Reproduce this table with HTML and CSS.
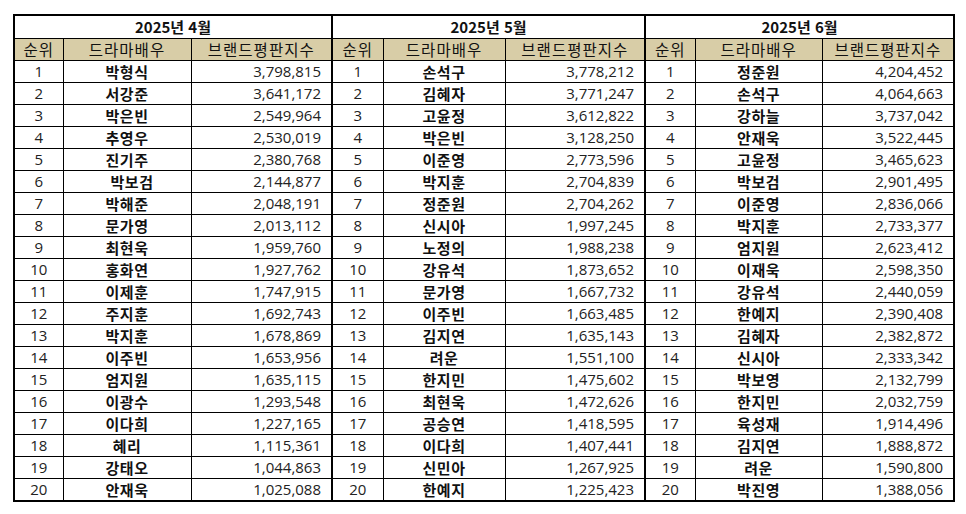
FILE: index.html
```html
<!DOCTYPE html>
<html lang="ko">
<head>
<meta charset="utf-8">
<title>드라마배우 브랜드평판지수</title>
<link rel="stylesheet" href="styles.css">
</head>
<body>
<table class="rank">
<colgroup>
<col class="c-rank"><col class="c-name"><col class="c-num">
<col class="c-rank2"><col class="c-name2"><col class="c-num2">
<col class="c-rank3"><col class="c-name3"><col class="c-num3">
</colgroup>
<tr class="title"><td colspan="3">2025년 4월</td><td colspan="3" class="g">2025년 5월</td><td colspan="3" class="g">2025년 6월</td></tr>
<tr class="hd"><td>순위</td><td>드라마배우</td><td>브랜드평판지수</td><td class="g">순위</td><td>드라마배우</td><td>브랜드평판지수</td><td class="g">순위</td><td>드라마배우</td><td>브랜드평판지수</td></tr>
<tr><td class="no">1</td><td class="name">박형식</td><td class="num">3,798,815</td><td class="g no">1</td><td class="name">손석구</td><td class="num">3,778,212</td><td class="g no">1</td><td class="name">정준원</td><td class="num">4,204,452</td></tr>
<tr><td class="no">2</td><td class="name">서강준</td><td class="num">3,641,172</td><td class="g no">2</td><td class="name">김혜자</td><td class="num">3,771,247</td><td class="g no">2</td><td class="name">손석구</td><td class="num">4,064,663</td></tr>
<tr><td class="no">3</td><td class="name">박은빈</td><td class="num">2,549,964</td><td class="g no">3</td><td class="name">고윤정</td><td class="num">3,612,822</td><td class="g no">3</td><td class="name">강하늘</td><td class="num">3,737,042</td></tr>
<tr><td class="no">4</td><td class="name">추영우</td><td class="num">2,530,019</td><td class="g no">4</td><td class="name">박은빈</td><td class="num">3,128,250</td><td class="g no">4</td><td class="name">안재욱</td><td class="num">3,522,445</td></tr>
<tr><td class="no">5</td><td class="name">진기주</td><td class="num">2,380,768</td><td class="g no">5</td><td class="name">이준영</td><td class="num">2,773,596</td><td class="g no">5</td><td class="name">고윤정</td><td class="num">3,465,623</td></tr>
<tr><td class="no">6</td><td class="name shift">박보검</td><td class="num">2,144,877</td><td class="g no">6</td><td class="name">박지훈</td><td class="num">2,704,839</td><td class="g no">6</td><td class="name">박보검</td><td class="num">2,901,495</td></tr>
<tr><td class="no">7</td><td class="name">박해준</td><td class="num">2,048,191</td><td class="g no">7</td><td class="name">정준원</td><td class="num">2,704,262</td><td class="g no">7</td><td class="name">이준영</td><td class="num">2,836,066</td></tr>
<tr><td class="no">8</td><td class="name">문가영</td><td class="num">2,013,112</td><td class="g no">8</td><td class="name">신시아</td><td class="num">1,997,245</td><td class="g no">8</td><td class="name">박지훈</td><td class="num">2,733,377</td></tr>
<tr><td class="no">9</td><td class="name">최현욱</td><td class="num">1,959,760</td><td class="g no">9</td><td class="name">노정의</td><td class="num">1,988,238</td><td class="g no">9</td><td class="name">엄지원</td><td class="num">2,623,412</td></tr>
<tr><td class="no">10</td><td class="name">홍화연</td><td class="num">1,927,762</td><td class="g no">10</td><td class="name">강유석</td><td class="num">1,873,652</td><td class="g no">10</td><td class="name">이재욱</td><td class="num">2,598,350</td></tr>
<tr><td class="no">11</td><td class="name">이제훈</td><td class="num">1,747,915</td><td class="g no">11</td><td class="name">문가영</td><td class="num">1,667,732</td><td class="g no">11</td><td class="name">강유석</td><td class="num">2,440,059</td></tr>
<tr><td class="no">12</td><td class="name">주지훈</td><td class="num">1,692,743</td><td class="g no">12</td><td class="name">이주빈</td><td class="num">1,663,485</td><td class="g no">12</td><td class="name">한예지</td><td class="num">2,390,408</td></tr>
<tr><td class="no">13</td><td class="name">박지훈</td><td class="num">1,678,869</td><td class="g no">13</td><td class="name">김지연</td><td class="num">1,635,143</td><td class="g no">13</td><td class="name">김혜자</td><td class="num">2,382,872</td></tr>
<tr><td class="no">14</td><td class="name">이주빈</td><td class="num">1,653,956</td><td class="g no">14</td><td class="name">려운</td><td class="num">1,551,100</td><td class="g no">14</td><td class="name">신시아</td><td class="num">2,333,342</td></tr>
<tr><td class="no">15</td><td class="name">엄지원</td><td class="num">1,635,115</td><td class="g no">15</td><td class="name">한지민</td><td class="num">1,475,602</td><td class="g no">15</td><td class="name">박보영</td><td class="num">2,132,799</td></tr>
<tr><td class="no">16</td><td class="name">이광수</td><td class="num">1,293,548</td><td class="g no">16</td><td class="name">최현욱</td><td class="num">1,472,626</td><td class="g no">16</td><td class="name">한지민</td><td class="num">2,032,759</td></tr>
<tr><td class="no">17</td><td class="name">이다희</td><td class="num">1,227,165</td><td class="g no">17</td><td class="name">공승연</td><td class="num">1,418,595</td><td class="g no">17</td><td class="name">육성재</td><td class="num">1,914,496</td></tr>
<tr><td class="no">18</td><td class="name">혜리</td><td class="num">1,115,361</td><td class="g no">18</td><td class="name">이다희</td><td class="num">1,407,441</td><td class="g no">18</td><td class="name">김지연</td><td class="num">1,888,872</td></tr>
<tr><td class="no">19</td><td class="name">강태오</td><td class="num">1,044,863</td><td class="g no">19</td><td class="name">신민아</td><td class="num">1,267,925</td><td class="g no">19</td><td class="name">려운</td><td class="num">1,590,800</td></tr>
<tr><td class="no">20</td><td class="name">안재욱</td><td class="num">1,025,088</td><td class="g no">20</td><td class="name">한예지</td><td class="num">1,225,423</td><td class="g no">20</td><td class="name">박진영</td><td class="num">1,388,056</td></tr>
</table>
</body>
</html>
```
FILE: styles.css
```css
html, body {
  background: #ffffff;
}
body {
  margin: 0;
  padding: 14px 0 0 13px;
  font-family: "Noto Sans CJK KR", "Noto Sans", sans-serif;
  color: #111111;
}
.rank {
  border-collapse: collapse;
  table-layout: fixed;
  width: 940px;
  border: 2px solid #000000;
}
.c-rank { width: 49px; }
.c-name { width: 128px; }
.c-num { width: 141px; }
.c-rank2 { width: 51px; }
.c-name2 { width: 122px; }
.c-num2 { width: 140px; }
.c-rank3 { width: 50px; }
.c-name3 { width: 127px; }
.c-num3 { width: 132px; }
.rank td {
  border: 1px solid #000000;
  height: 21px;
  padding: 0;
  font-size: 15px;
  line-height: 21px;
  text-align: center;
  white-space: nowrap;
  overflow: hidden;
}
.rank td.g {
  border-left: 2px solid #000000;
}
.rank td.no,
.rank td.num {
  font-family: "Open Sans", "Noto Sans", sans-serif;
  color: #222222;
}
.rank td.num {
  text-align: right;
  padding-right: 10px;
}
.rank td.name {
  font-weight: bold;
  letter-spacing: 0.5px;
}
.rank td.shift {
  padding-left: 10px;
}
.rank .title td {
  font-weight: bold;
  font-family: "Noto Sans CJK KR", sans-serif;
  height: 22px;
  line-height: 22px;
}
.rank .hd td {
  background: #d8cda7;
  font-size: 15.5px;
  letter-spacing: 1px;
}
```
